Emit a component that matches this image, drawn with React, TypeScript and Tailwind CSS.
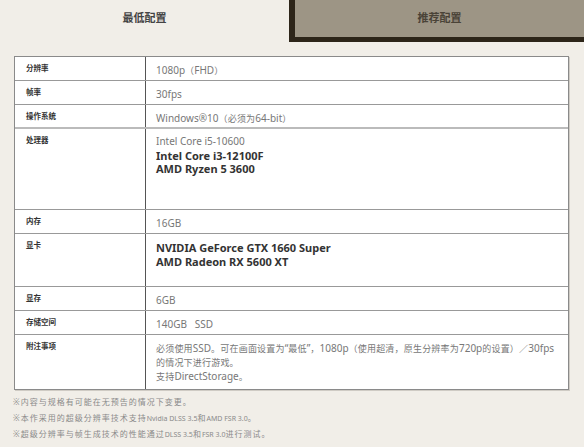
import React from "react";

const font = { fontFamily: '"Noto Sans", "Noto Sans CJK SC", sans-serif' };

const CJK = /([\u3000-\u303f\u4e00-\u9fff\uff00-\uffef※]+)/;

function Mix({ text, cjk, lat }: { text: string; cjk: string; lat: string }) {
  const parts = text.split(CJK).filter((p) => p.length > 0);
  return (
    <>
      {parts.map((p, i) =>
        CJK.test(p) ? (
          <span key={i} className={cjk}>
            {p}
          </span>
        ) : (
          <span key={i} className={lat}>
            {p}
          </span>
        )
      )}
    </>
  );
}

const CJKV = "text-[9px] leading-none tracking-[0.2px]";
const LATV = "text-[10px] leading-none";

const V = ({ t }: { t: string }) => (
  <div className="text-[10px] leading-[16px] pt-[1px] text-[#777] whitespace-nowrap">
    <Mix text={t} cjk={CJKV} lat={LATV} />
  </div>
);

type Row = { label: string; h: string; content: React.ReactNode };

const rows: Row[] = [
  { label: "分辨率", h: "h-[24px]", content: <V t="1080p（FHD）" /> },
  { label: "帧率", h: "h-[24px]", content: <V t="30fps" /> },
  { label: "操作系统", h: "h-[24px]", content: <V t="Windows®10（必须为64-bit）" /> },
  {
    label: "处理器",
    h: "h-[81px]",
    content: (
      <div className="leading-[13.5px] pt-[2px]">
        <div className="text-[10px] text-[#777]">Intel Core i5-10600</div>
        <div className="text-[11px] font-bold text-[#333]">Intel Core i3-12100F</div>
        <div className="text-[11px] font-bold text-[#333]">AMD Ryzen 5 3600</div>
      </div>
    ),
  },
  { label: "内存", h: "h-[24px]", content: <V t="16GB" /> },
  {
    label: "显卡",
    h: "h-[53px]",
    content: (
      <div className="text-[11px] leading-[14px] pt-[3px] font-bold text-[#333]">
        <div>NVIDIA GeForce GTX 1660 Super</div>
        <div>AMD Radeon RX 5600 XT</div>
      </div>
    ),
  },
  { label: "显存", h: "h-[24px]", content: <V t="6GB" /> },
  { label: "存储空间", h: "h-[24px]", content: <V t={"140GB\u00a0\u00a0\u00a0SSD"} /> },
  {
    label: "附注事项",
    h: "h-[54px]",
    content: (
      <div className="text-[10px] leading-[14px] text-[#777] pt-[2px] whitespace-nowrap">
        <div>
          <Mix text="必须使用SSD。可在画面设置为“最低”，1080p（使用超清，原生分辨率为720p的设置）／30fps" cjk={CJKV} lat={LATV} />
        </div>
        <div>
          <Mix text="的情况下进行游戏。" cjk={CJKV} lat={LATV} />
        </div>
        <div>
          <Mix text="支持DirectStorage。" cjk={CJKV} lat={LATV} />
        </div>
      </div>
    ),
  },
];

const notes = [
  "※内容与规格有可能在无预告的情况下变更。",
  "※本作采用的超级分辨率技术支持Nvidia DLSS 3.5和AMD FSR 3.0。",
  "※超级分辨率与帧生成技术的性能通过DLSS 3.5和FSR 3.0进行测试。",
];

export default function App() {
  return (
    <div className="w-[584px] h-[447px] bg-[#f1eee8] overflow-hidden" style={font}>
      <div className="flex h-[42px]">
        <div className="w-[289px] flex items-start justify-center pt-[10px] text-[11px] font-bold text-[#444]">
          最低配置
        </div>
        <div className="flex-1 flex items-start justify-center bg-[#9d9585] border-l-[6px] border-b-[5px] border-[#2d2519] pt-[10px] text-[11px] font-bold text-[#4a4337]">
          推荐配置
        </div>
      </div>
      <div className="ml-[14px] mt-[14px] w-[555px] border border-[#8a8a8a] bg-white shadow-[1px_1px_0_#cfcbc4]">
        {rows.map((r, i) => (
          <div
            key={r.label}
            className={`flex ${r.h} ${i < rows.length - 1 ? (i === 2 ? "border-b-2 border-[#bbbbbb]" : "border-b border-[#999]") : ""}`}
          >
            <div className="w-[131px] shrink-0 border-r border-[#555] pl-[11px] pt-[6px] text-[7.5px] leading-[10px] font-bold text-[#333]">
              {r.label}
            </div>
            <div className="flex-1 pl-[10px] pt-[4px]">{r.content}</div>
          </div>
        ))}
      </div>
      <div className="ml-[13px] mt-[5px] text-[7px] leading-[16px] text-[#8a8a8a] whitespace-nowrap">
        {notes.map((n) => (
          <div key={n} className="h-[16px]">
            <Mix text={n} cjk="text-[8px] leading-none tracking-[1px]" lat="text-[7px] leading-none" />
          </div>
        ))}
      </div>
    </div>
  );
}
